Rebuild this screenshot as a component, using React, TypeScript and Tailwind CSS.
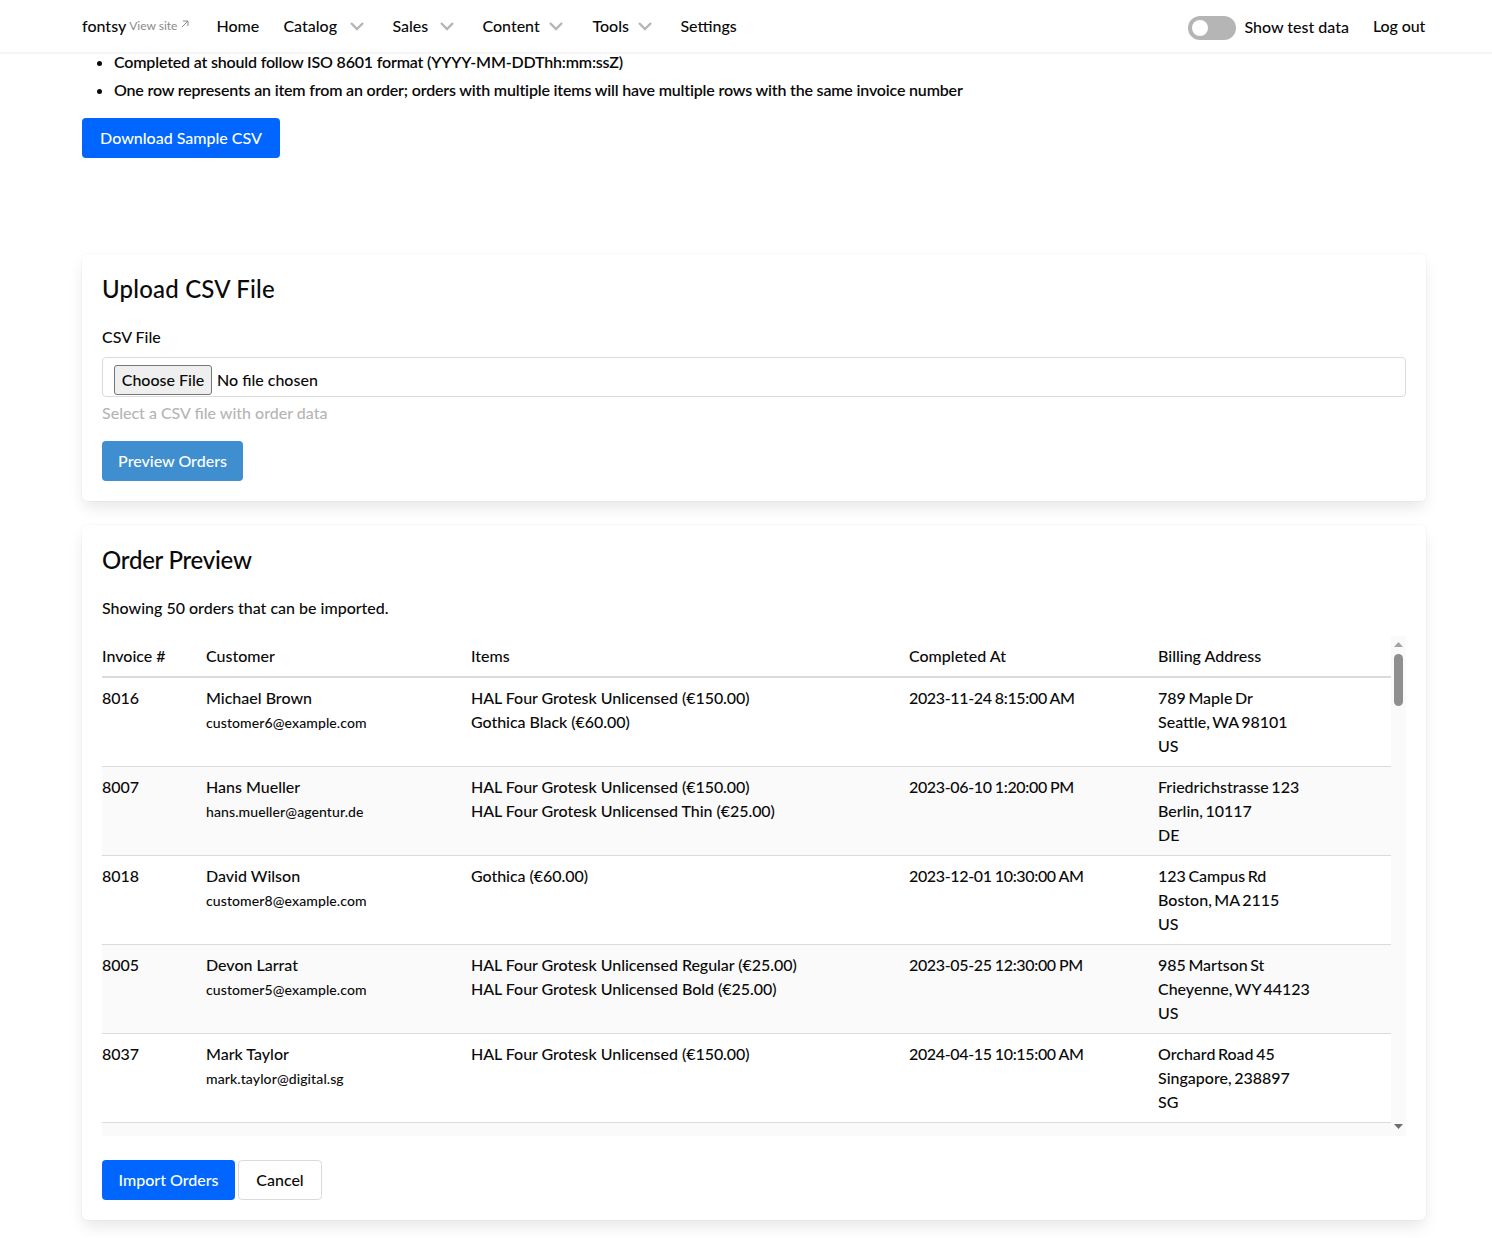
import React from "react";

type Row = { id: string; name: string; email: string; items: string[]; at: string; addr: string[] };

const rows: Row[] = [
  { id: "8016", name: "Michael Brown", email: "customer6@example.com", items: ["HAL Four Grotesk Unlicensed (€150.00)", "Gothica Black (€60.00)"], at: "2023-11-24 8:15:00 AM", addr: ["789 Maple Dr", "Seattle, WA 98101", "US"] },
  { id: "8007", name: "Hans Mueller", email: "hans.mueller@agentur.de", items: ["HAL Four Grotesk Unlicensed (€150.00)", "HAL Four Grotesk Unlicensed Thin (€25.00)"], at: "2023-06-10 1:20:00 PM", addr: ["Friedrichstrasse 123", "Berlin, 10117", "DE"] },
  { id: "8018", name: "David Wilson", email: "customer8@example.com", items: ["Gothica (€60.00)"], at: "2023-12-01 10:30:00 AM", addr: ["123 Campus Rd", "Boston, MA 2115", "US"] },
  { id: "8005", name: "Devon Larrat", email: "customer5@example.com", items: ["HAL Four Grotesk Unlicensed Regular (€25.00)", "HAL Four Grotesk Unlicensed Bold (€25.00)"], at: "2023-05-25 12:30:00 PM", addr: ["985 Martson St", "Cheyenne, WY 44123", "US"] },
  { id: "8037", name: "Mark Taylor", email: "mark.taylor@digital.sg", items: ["HAL Four Grotesk Unlicensed (€150.00)"], at: "2024-04-15 10:15:00 AM", addr: ["Orchard Road 45", "Singapore, 238897", "SG"] },
];

function Chevron() {
  return (
    <svg width="14" height="9" viewBox="0 0 14 9" fill="none" stroke="#b5b5b5" strokeWidth="2.4" className="ml-[10px] shrink-0">
      <path d="M1 1l6 6 6-6" />
    </svg>
  );
}

const card = "rounded-md bg-white p-5 shadow-[0_8px_16px_-2px_rgba(10,10,10,0.1),0_0_0_1px_rgba(10,10,10,0.02)]";

export default function App() {
  return (
    <div className="font-['Lato','Noto_Sans',sans-serif] font-medium text-base text-[#0a0a0a] bg-white h-[1238px] overflow-hidden">
      <nav className="relative z-10 bg-white h-[54px] border-b-2 border-[#f5f5f5] flex items-center pl-[82px] pr-[67px]">
        <span>fontsy</span>
        <span className="ml-[3px] text-xs font-normal text-[#8a8a8a]">View site</span>
        <svg width="8" height="8" viewBox="0 0 8 8" fill="none" stroke="#8a8a8a" className="ml-[4px] mb-1"><path d="M1 7l6-6M2 1h5v5" /></svg>
        <a className="ml-[27px] w-[42px]">Home</a>
        <a className="ml-[25px] flex items-center"><span className="w-[57px]">Catalog</span><Chevron /></a>
        <a className="ml-7 flex items-center"><span className="w-[38px]">Sales</span><Chevron /></a>
        <a className="ml-7 flex items-center"><span className="w-[57px]">Content</span><Chevron /></a>
        <a className="ml-[29px] flex items-center"><span className="w-[36px]">Tools</span><Chevron /></a>
        <a className="ml-7">Settings</a>
        <div className="ml-auto flex items-center mt-[2px]">
          <span className="relative w-12 h-6 rounded-full bg-[#b5b5b5] mt-[2px]">
            <span className="absolute left-[4px] top-[4px] w-4 h-4 rounded-full bg-white" />
          </span>
          <span className="ml-2">Show test data</span>
          <a className="ml-6 -mt-[2px] w-[52px] whitespace-nowrap tracking-[-0.1px]">Log out</a>
        </div>
      </nav>
      <main className="-mt-[6px] pl-[82px] pr-[66px]">
        <ul className="list-disc pl-8 font-semibold tracking-[-0.18px]">
          <li className="leading-7">Completed at should follow ISO 8601 format (YYYY-MM-DDThh:mm:ssZ)</li>
          <li className="leading-7">One row represents an item from an order; orders with multiple items will have multiple rows with the same invoice number</li>
        </ul>
        <button className="mt-[14px] h-10 w-[198px] rounded bg-[#0066ff] text-white font-medium block">Download Sample CSV</button>

        <section className={`mt-24 ${card}`}>
          <h2 className="text-2xl leading-[30px] font-medium tracking-[0.2px]">Upload CSV File</h2>
          <label className="block mt-[21px] leading-6">CSV File</label>
          <div className="mt-2 h-10 border border-[#dbdbdb] rounded flex items-center pl-[11px]">
            <span className="mt-[6px] h-[30px] w-[98px] justify-center border border-[#767676] rounded-[3px] bg-[#efefef] flex items-center">Choose File</span>
            <span className="ml-[5px] mt-[6px]">No file chosen</span>
          </div>
          <p className="mt-1 leading-6 text-[#b5b5b5]">Select a CSV file with order data</p>
          <button className="mt-4 h-10 w-[141px] rounded bg-[#3e8ed0] text-white font-medium block">Preview Orders</button>
        </section>

        <section className={`mt-6 ${card}`}>
          <h2 className="text-2xl leading-[30px] font-medium tracking-[-0.25px]">Order Preview</h2>
          <p className="mt-[21px] leading-6">Showing 50 orders that can be imported.</p>
          <div className="mt-4 h-[500px] flex">
            <div className="flex-1 flex flex-col">
              <table className="w-full table-fixed border-collapse">
                <colgroup>
                  <col className="w-[104px]" />
                  <col className="w-[265px]" />
                  <col className="w-[438px]" />
                  <col className="w-[249px]" />
                  <col />
                </colgroup>
                <thead>
                  <tr className="border-b-2 border-[#dbdbdb] text-left">
                    <th className="py-2 font-medium leading-6">Invoice #</th>
                    <th className="py-2 font-medium leading-6">Customer</th>
                    <th className="py-2 font-medium leading-6">Items</th>
                    <th className="py-2 font-medium leading-6">Completed At</th>
                    <th className="py-2 font-medium leading-6">Billing Address</th>
                  </tr>
                </thead>
                <tbody>
                  {rows.map((r, i) => (
                    <tr key={r.id} className={`border-b border-[#dbdbdb] align-top ${i % 2 ? "bg-[#fafafa]" : ""}`}>
                      <td className="py-2 leading-6">{r.id}</td>
                      <td className="py-2 leading-6">
                        <div>{r.name}</div>
                        <div className="text-sm leading-[26px] tracking-[0.1px]">{r.email}</div>
                      </td>
                      <td className="py-2 leading-6 tracking-[-0.04px]">
                        {r.items.map((t) => <div key={t}>{t}</div>)}
                      </td>
                      <td className="py-2 leading-6 tracking-[-0.35px] [word-spacing:-0.5px]">{r.at}</td>
                      <td className="py-2 leading-6 [word-spacing:-1.5px]">
                        {r.addr.map((t) => <div key={t}>{t}</div>)}
                      </td>
                    </tr>
                  ))}
                </tbody>
              </table>
              <div className="flex-1 bg-[#fafafa]" />
            </div>
            <div className="w-[15px] bg-[#fafafa] flex flex-col items-center">
              <svg width="9" height="5" viewBox="0 0 9 5" className="mt-[6px]"><path d="M4.5 0L9 5H0z" fill="#a3a3a3" /></svg>
              <div className="mt-[7px] w-[9px] h-[52px] rounded-full bg-[#8f8f8f]" />
              <div className="flex-1" />
              <svg width="9" height="5" viewBox="0 0 9 5" className="mb-[7px]"><path d="M0 0h9L4.5 5z" fill="#6e6e6e" /></svg>
            </div>
          </div>
          <div className="mt-6 flex gap-[3px]">
            <button className="h-10 w-[133px] rounded bg-[#0066ff] text-white font-medium">Import Orders</button>
            <button className="h-10 w-[84px] rounded border border-[#dbdbdb] bg-white font-medium">Cancel</button>
          </div>
        </section>
      </main>
    </div>
  );
}
